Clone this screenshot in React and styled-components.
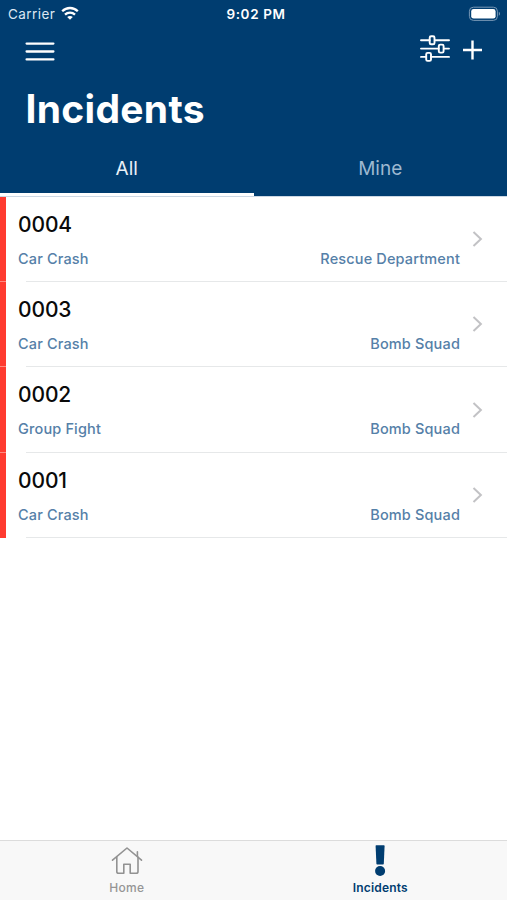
import React from 'react';
import styled, { createGlobalStyle } from 'styled-components';

const GlobalStyle = createGlobalStyle`
    body{
        margin:0;
        background:#fff;
        font-family:Inter, "Liberation Sans", sans-serif;
    }
`;

const Screen = styled.div`
    display:flex;
    flex-direction:column;
    width:507px;
    height:900px;
    overflow:hidden;
    background:#fff;
`;

const Header = styled.header`
    flex:none;
    height:196px;
    display:flex;
    flex-direction:column;
    border-bottom:1px solid #ccd8e4;
    background:#003d70;
    color:#fff;
`;

const StatusBar = styled.div`
    flex:none;
    height:28px;
    box-sizing:border-box;
    padding:0 6px 0 8px;
    display:grid;
    grid-template-columns:1fr auto 1fr;
    align-items:center;
    font-size:13.5px;
    line-height:28px;
`;

const Carrier = styled.div`
    display:flex;
    align-items:center;
    gap:6px;
    color:#dce7f2;
    letter-spacing:0.45px;
`;

const Clock = styled.div`
    padding-left:3px;
    font-size:13.5px;
    font-weight:600;
    letter-spacing:0.6px;
`;

const Battery = styled.svg`
    justify-self:end;
    display:block;
    margin-bottom:1px;
`;

const Toolbar = styled.div`
    flex:none;
    height:50px;
    box-sizing:border-box;
    padding:0 24px 2px 25px;
    display:flex;
    align-items:center;
    justify-content:space-between;
`;

const Actions = styled.div`
    display:flex;
    align-items:center;
    gap:12px;
    padding-bottom:8px;
`;

const Icon = styled.svg`
    display:block;
    flex:none;
`;

const Title = styled.h1`
    flex:none;
    margin:0;
    padding-left:25.5px;
    height:61px;
    font-size:39px;
    font-weight:700;
    line-height:61px;
    letter-spacing:0.3px;
`;

const Tabs = styled.nav`
    flex:1;
    display:flex;
`;

const Tab = styled.div`
    flex:1;
    box-sizing:border-box;
    padding-top:6px;
    border-bottom:3px solid ${props => props.$active ? "#fff" : "transparent"};
    color:${props => props.$active ? "#e9f0f7" : "#9db8d0"};
    font-size:19px;
    line-height:48px;
    text-align:center;
    letter-spacing:0;
`;

const List = styled.main`
    flex:1;
`;

const Row = styled.div`
    display:flex;
    height:85.5px;
    &:first-child{
        height:84.5px;
    }
`;

const Stripe = styled.div`
    width:6px;
    box-sizing:border-box;
    background:#ff3b30;
    border-bottom:1px solid ${props => props.$last ? "#ff3b30" : "#ff8a80"};
`;

const RowBody = styled.div`
    flex:1;
    box-sizing:border-box;
    padding:0 24px 0 12px;
    display:flex;
    align-items:center;
    background:linear-gradient(#e6e8e9, #e6e8e9) 20px 100% / 100% 1px no-repeat;
`;

const Details = styled.div`
    flex:1;
    display:flex;
    flex-direction:column;
    gap:8px;
    padding-top:4.8px;
`;

const Number = styled.div`
    color:#0a0a0a;
    font-size:21px;
    font-weight:500;
    line-height:26px;
    letter-spacing:-0.1px;
`;

const Meta = styled.div`
    display:flex;
    justify-content:space-between;
    color:#5580a8;
    font-size:14.5px;
    font-weight:500;
    line-height:26px;
    letter-spacing:0.15px;
`;

const Chevron = styled(Icon)`
    margin-left:12px;
`;

const TabBar = styled.footer`
    flex:none;
    height:60px;
    box-sizing:border-box;
    border-top:1px solid #dcdcdc;
    display:flex;
    background:#f8f8f8;
`;

const TabBarItem = styled.div`
    flex:1;
    padding-top:4px;
    display:flex;
    flex-direction:column;
    align-items:center;
    gap:2px;
    color:${props => props.$active ? "#003d70" : "#959595"};
    font-size:12px;
    font-weight:${props => props.$active ? 600 : 500};
    line-height:18px;
    letter-spacing:${props => props.$active ? 0.2 : 0.3}px;
`;

const incidents = [
    { number:"0004", type:"Car Crash", team:"Rescue Department" },
    { number:"0003", type:"Car Crash", team:"Bomb Squad" },
    { number:"0002", type:"Group Fight", team:"Bomb Squad" },
    { number:"0001", type:"Car Crash", team:"Bomb Squad" },
];

const WifiIcon = () => (
    <Icon width="18" height="16" viewBox="0 0 18 16" fill="none" stroke="#fff" strokeWidth="2.3">
        <path d="M1.2 5.2C5.6 .9 12.4 .9 16.8 5.2" />
        <path d="M4 8.6C6.8 5.9 11.2 5.9 14 8.6" />
        <path d="M9 13.8L6.2 11C7.8 9.6 10.2 9.6 11.8 11Z" fill="#fff" stroke="none" />
    </Icon>
);

const BatteryIcon = () => (
    <Battery width="33" height="16" viewBox="0 0 33 16">
        <rect x="1.4" y="1.2" width="28" height="13.2" rx="4" fill="none" stroke="#7797b5" strokeWidth="1" />
        <rect x="3.2" y="3" width="24.4" height="9.6" rx="2.4" fill="#fff" />
        <path d="M30.8 5.8C32.4 6.4 32.4 9.2 30.8 9.8Z" fill="#7797b5" />
    </Battery>
);

const MenuIcon = () => (
    <Icon width="30" height="22" viewBox="0 0 30 22" stroke="#fff" strokeWidth="2.3" strokeLinecap="round">
        <path d="M1.6 2.6H28.4M1.6 10.5H28.4M1.6 18.4H28.4" />
    </Icon>
);

const FilterIcon = () => (
    <Icon width="30" height="28" viewBox="0 0 30 28" fill="none" stroke="#fff" strokeWidth="1.9" strokeLinecap="round">
        <path d="M1 6.3H9.6M15 6.3H29M1 14.6H18.6M24 14.6H29M1 22.9H6M11.4 22.9H29" />
        <rect x="9.7" y="2.3" width="4.8" height="8" rx="1.4" />
        <rect x="18.8" y="10.6" width="4.8" height="8" rx="1.4" />
        <rect x="6.2" y="18.9" width="4.8" height="8" rx="1.4" />
    </Icon>
);

const PlusIcon = () => (
    <Icon width="21" height="24" viewBox="0 0 21 24" stroke="#fff" strokeWidth="2.4">
        <path d="M1 14H20M10.5 4.5V23.5" />
    </Icon>
);

const HomeIcon = () => (
    <Icon width="32" height="32" viewBox="0 0 32 32" fill="none" stroke="#929292" strokeWidth="1.6" strokeLinecap="round" strokeLinejoin="round">
        <path d="M1.5 15.2L16 3L30.5 15.2" />
        <path d="M26.4 11V6.8" />
        <path d="M5.8 12V26.4Q5.8 28.2 7.6 28.2H12.8V19.2H19.2V28.2H25.2Q27 28.2 27 26.4V12" />
    </Icon>
);

const AlertIcon = () => (
    <Icon width="32" height="32" viewBox="0 0 32 32" fill="#003d70">
        <path d="M11.6 .9Q11.6 .3 12.2 .3H20Q20.6 .3 20.6 .9L19.8 18.8Q19.7 19.4 19.1 19.4H13.1Q12.5 19.4 12.4 18.8Z" />
        <circle cx="16.1" cy="26" r="5" />
    </Icon>
);

class Incident extends React.Component {
    render() {
        const { number, type, team, last } = this.props;
        return (
        <Row>
            <Stripe $last={last}></Stripe>
            <RowBody>
                <Details>
                    <Number>{number}</Number>
                    <Meta>
                        <span>{type}</span>
                        <span>{team}</span>
                    </Meta>
                </Details>
                <Chevron width="11" height="16" viewBox="0 0 11 16" fill="none" stroke="#c2c2c5" strokeWidth="2">
                    <path d="M1.5 1L8.9 8L1.5 15" />
                </Chevron>
            </RowBody>
        </Row>
        );
    }
}

export default function App() {
    return (
        <Screen>
            <GlobalStyle />
            <Header>
                <StatusBar>
                    <Carrier>Carrier<WifiIcon /></Carrier>
                    <Clock>9:02 PM</Clock>
                    <BatteryIcon />
                </StatusBar>
                <Toolbar>
                    <MenuIcon />
                    <Actions>
                        <FilterIcon />
                        <PlusIcon />
                    </Actions>
                </Toolbar>
                <Title>Incidents</Title>
                <Tabs>
                    <Tab $active>All</Tab>
                    <Tab>Mine</Tab>
                </Tabs>
            </Header>
            <List>
                {incidents.map((item, i) => (
                    <Incident key={item.number} {...item} last={i === incidents.length - 1} />
                ))}
            </List>
            <TabBar>
                <TabBarItem><HomeIcon />Home</TabBarItem>
                <TabBarItem $active><AlertIcon />Incidents</TabBarItem>
            </TabBar>
        </Screen>
    );
}
